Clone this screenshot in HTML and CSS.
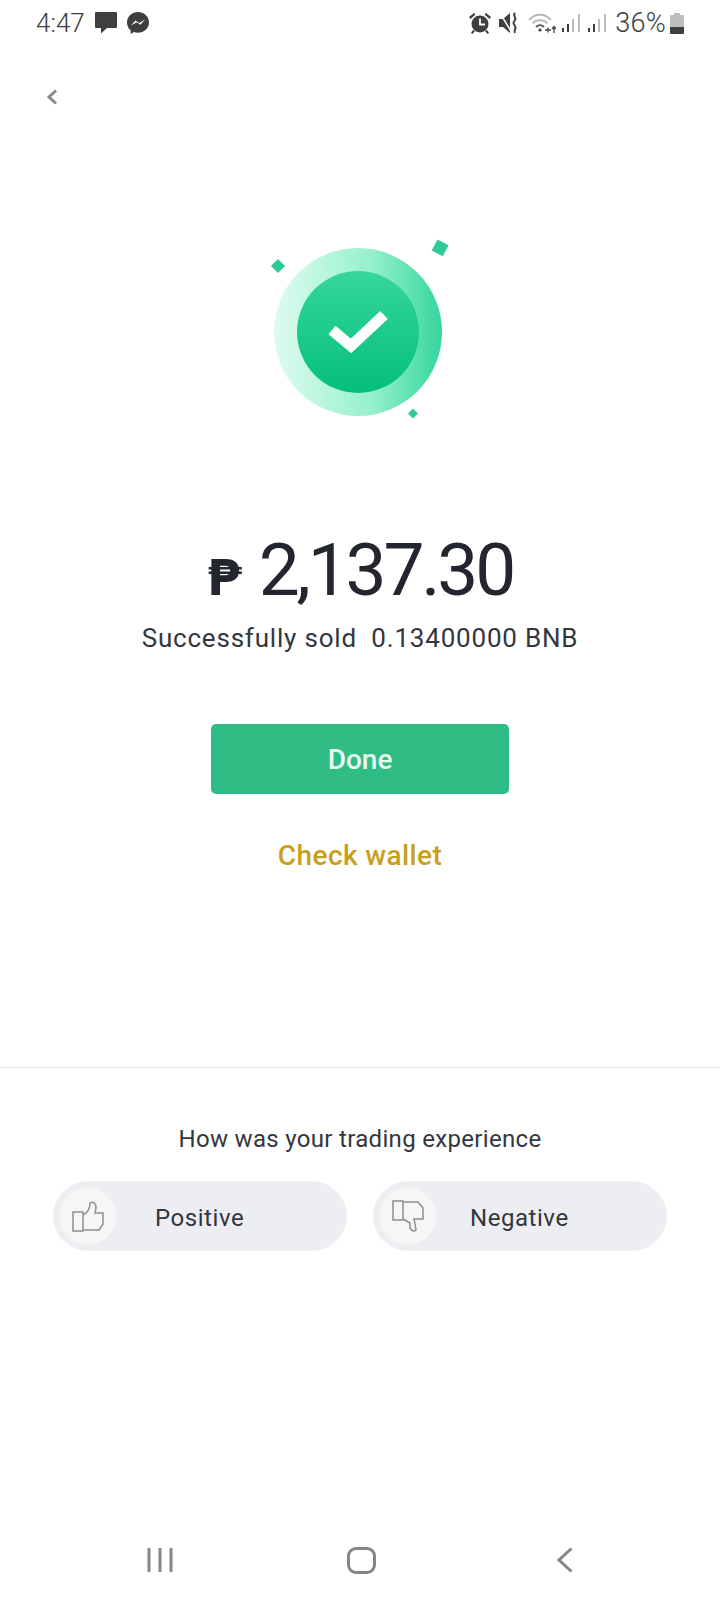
FILE: index.html
```html
<!DOCTYPE html>
<html lang="en">
<head>
<meta charset="utf-8">
<title>Sold</title>
<link rel="stylesheet" href="styles.css">
</head>
<body>
<div class="page">
  <header class="status">
    <div class="status-left">
      <span class="time">4:47</span>
      <svg class="ic-msg" viewBox="0 0 22 22"><path d="M1 0h20a1 1 0 0 1 1 1v14a1 1 0 0 1-1 1H12l-6 5.500 0-5.500H1a1 1 0 0 1-1-1V1a1 1 0 0 1 1-1z"/></svg>
      <svg class="ic-mess" viewBox="0 0 22 22"><path d="M11 0C5 0 0 4.500 0 10.500c0 3.200 1.400 5.900 3.600 7.800V22l3.400-1.900c1.300.4 2.600.6 4 .6 6 0 11-4.300 11-10.200S17 0 11 0z"/><path class="wave" d="M3.800 13.500l4.800-5 3.500 2.600 6-3.600-4.800 5.200-3.600-2.500z"/></svg>
    </div>
    <div class="status-right">
      <svg class="ic-alarm" viewBox="0 0 22 22"><circle cx="11" cy="12" r="8.500"/><path d="M0 5l5-4 1.500 1.500-5 4.500zM22 5l-5-4-1.500 1.500 5 4.500zM4 18l-2 3 1.500 1 2.500-3zM18 18l2 3-1.500 1-2.500-3z"/><path class="hand" d="M11 6.500v6h5"/></svg>
      <svg class="ic-mute" viewBox="0 0 20 22"><path d="M0 7h4l7-6v20l-7-6H0z"/><path class="cut" d="M1 1l12 20"/><path class="wavy" d="M16 1c-3 3 2 4 0 7s-2 3 0 6-2 4 0 7"/></svg>
      <svg class="ic-wifi" viewBox="0 0 28 22"><path class="arc" d="M1 8c6-7 16-7 22 0M4.500 11.500c4-4.500 11-4.500 15 0"/><path class="arc-dark" d="M8 15c2.500-2.500 5.500-2.500 8 0"/><circle cx="12" cy="18" r="1.600"/><path d="M17 18h6M20 15.500v5M26 21v-6M24 17l2-2.500 2 2.500" class="arrows"/></svg>
      <svg class="ic-signal" viewBox="0 0 19 20"><rect class="on" x="0" y="15" width="2" height="4"/><rect class="on" x="5" y="11" width="2" height="8"/><rect class="off" x="10" y="6" width="2" height="13"/><rect class="off" x="16" y="1" width="2" height="18"/></svg>
      <svg class="ic-signal ic-signal-b" viewBox="0 0 19 20"><rect class="on" x="0" y="15" width="2" height="4"/><rect class="on" x="5" y="11" width="2" height="8"/><rect class="off" x="10" y="6" width="2" height="13"/><rect class="off" x="16" y="1" width="2" height="18"/></svg>
      <span class="pct">36%</span>
      <svg class="ic-batt" viewBox="0 0 14 21"><path class="batt-empty" d="M4 0h6v2h3a1 1 0 0 1 1 1v11H0V3a1 1 0 0 1 1-1h3z"/><path d="M0 14h14v6a1 1 0 0 1-1 1H1a1 1 0 0 1-1-1z"/></svg>
    </div>
  </header>

  <div class="topbar">
    <svg class="back" viewBox="0 0 12 16"><path d="M10 1.500L3 8l7 6.500"/></svg>
  </div>

  <main class="result">
    <svg class="hero" viewBox="0 0 200 200">
      <defs>
        <linearGradient id="ring" x1="0" y1="0" x2="1" y2="0">
          <stop offset="0" stop-color="#dffbf0"/>
          <stop offset=".3" stop-color="#b9f6de"/>
          <stop offset=".6" stop-color="#92efcb"/>
          <stop offset="1" stop-color="#35d69c"/>
        </linearGradient>
        <linearGradient id="core" x1="0" y1="0" x2="0" y2="1">
          <stop offset="0" stop-color="#35d69c"/>
          <stop offset="1" stop-color="#05bf7a"/>
        </linearGradient>
      </defs>
      <circle cx="88" cy="92" r="84" fill="url(#ring)"/>
      <circle cx="88" cy="92" r="61" fill="url(#core)"/>
      <path class="tick" d="M62 90l19 16 33-31"/>
      <rect class="spark" x="3" y="21" width="10" height="10" transform="rotate(45 8 26)"/>
      <rect class="spark" x="164" y="1.500" width="12.500" height="12.500" transform="rotate(28 170 7.500)"/>
      <rect class="spark" x="139.500" y="170" width="7" height="7" transform="rotate(45 143 173.500)"/>
    </svg>
    <h1 class="amount"><span class="peso">₱</span><span class="figure">2,137.30</span></h1>
    <p class="sold">Successfully sold&nbsp; 0.13400000 BNB</p>
    <button class="done">Done</button>
    <a class="wallet">Check wallet</a>
  </main>

  <section class="feedback">
    <p class="question">How was your trading experience</p>
    <div class="choices">
      <div class="pill">
        <span class="disc"><svg class="thumb" viewBox="0 0 32 32"><path d="M1 12h10v19H1zM11 15c4-2 7-6 7-12 3-2 6 0 6 5l-1 5h8v11l-4 6H11"/></svg></span>
        <span class="pill-label">Positive</span>
      </div>
      <div class="pill">
        <span class="disc"><svg class="thumb" viewBox="0 0 32 32"><path d="M1 1h10v19H1zM11 2h15l5 6v11H22l1 5 1 6c-2 2-4 1-6-2v-5l-7-4"/></svg></span>
        <span class="pill-label pill-label-neg">Negative</span>
      </div>
    </div>
  </section>

  <nav class="navbar">
    <svg class="nav-recent" viewBox="0 0 26 26"><path d="M2 1v24M13 1v24M24 1v24"/></svg>
    <span class="nav-home"></span>
    <svg class="nav-back" viewBox="0 0 16 26"><path d="M14.500 1.500L2 13l12.500 11.500"/></svg>
  </nav>
</div>
</body>
</html>
```
FILE: styles.css
```css
* { box-sizing: border-box; }
html, body { margin: 0; padding: 0; background: #fff; }
body { font-family: Roboto, "Liberation Sans", sans-serif; color: #23262f; }
.page { width: 720px; height: 1600px; display: flex; flex-direction: column; overflow: hidden; }

.status { height: 46px; padding: 0 36px; display: flex; justify-content: space-between; align-items: center; flex: none; }
.status-left, .status-right { display: flex; align-items: center; }
.time, .pct { font-size: 26px; font-weight: 300; color: #3d3d3d; line-height: 1; }
svg { display: block; fill: #3f3f3f; }
.ic-msg { width: 22px; height: 22px; margin-left: 10px; }
.ic-mess { width: 22px; height: 22px; margin-left: 10px; }
.wave { fill: #fff; }
.ic-alarm { width: 22px; height: 22px; }
.hand { fill: none; stroke: #fff; stroke-width: 1.800; }
.ic-mute { width: 20px; height: 22px; margin-left: 8px; }
.cut { fill: none; stroke: #fff; stroke-width: 1.500; }
.wavy { fill: none; stroke: #3f3f3f; stroke-width: 2; }
.ic-wifi { width: 28px; height: 22px; margin-left: 9px; }
.arc { fill: none; stroke: #b5b5b5; stroke-width: 1.800; }
.arc-dark { fill: none; stroke: #555; stroke-width: 1.800; }
.arrows { fill: none; stroke: #444; stroke-width: 1.300; }
.ic-signal { width: 19px; height: 20px; margin-left: 6px; }
.ic-signal-b { margin-left: 7px; }
.on { fill: #3f3f3f; }
.off { fill: #bcbcbc; }
.pct { margin-left: 8px; font-size: 27px; letter-spacing: .3px; }
.ic-batt { width: 14px; height: 21px; margin-left: 4px; }
.batt-empty { fill: #bdbdbd; }

.topbar { height: 102px; padding: 0 46px; display: flex; align-items: center; flex: none; }
.back { width: 12px; height: 16px; fill: none; stroke: #8a8a8a; stroke-width: 3; }

.result { display: flex; flex-direction: column; align-items: center; flex: none; }
.hero { width: 200px; height: 200px; margin: 92px 0 0 19px; overflow: visible; }
.tick { fill: none; stroke: #fff; stroke-width: 11; }
.spark { fill: #2fcb92; }
.amount { display: flex; align-items: baseline; margin: 90px 0 0; height: 80px; font-weight: 400; color: #23262f; }
.peso { font-family: "DejaVu Sans", sans-serif; font-weight: 700; font-size: 50px; margin-right: 17px; }
.figure { font-family: Roboto, sans-serif; font-size: 73px; letter-spacing: -3.200px; line-height: 80px; }
.sold { margin: 11px 0 0; font-size: 26px; line-height: 34px; letter-spacing: 0.800px; font-weight: 400; color: #33363d; }
.done { width: 298px; height: 70px; margin-top: 69px; border: 0; border-radius: 5px; background: #2fbd85; color: #e9fbf3; font: 500 28px Roboto, sans-serif; }
.wallet { margin-top: 44px; font-size: 28px; line-height: 36px; font-weight: 500; letter-spacing: .4px; color: #c8a020; }

.feedback { margin-top: 193px; border-top: 1px solid #e6e7ea; padding: 55px 53px 0; flex: none; }
.question { margin: 0; text-align: center; font-size: 24px; line-height: 32px; font-weight: 400; letter-spacing: .32px; color: #33363d; }
.choices { display: flex; gap: 26px; margin-top: 26px; }
.pill { width: 294px; height: 70px; border-radius: 35px; background: #eceef2; display: flex; align-items: center; padding-left: 6px; }
.disc { width: 57px; height: 57px; border-radius: 50%; background: #f6f6f7; display: flex; align-items: center; justify-content: center; flex: none; }
.thumb { width: 32px; height: 32px; fill: none; stroke: #8d8f92; stroke-width: 1.500; }
.pill-label { margin-left: 39px; padding-top: 4px; font-size: 24px; font-weight: 400; color: #33363d; letter-spacing: .55px; }
.pill-label-neg { margin-left: 34px; }

.navbar { margin-top: auto; height: 53px; display: flex; align-items: flex-start; padding-left: 147px; flex: none; }
.nav-recent { width: 26px; height: 26px; fill: none; stroke: #858585; stroke-width: 3; }
.nav-home { width: 29px; height: 27px; margin-left: 174px; border: 3px solid #858585; border-radius: 9px; }
.nav-back { width: 16px; height: 26px; margin-left: 181px; fill: none; stroke: #858585; stroke-width: 3; }
```
